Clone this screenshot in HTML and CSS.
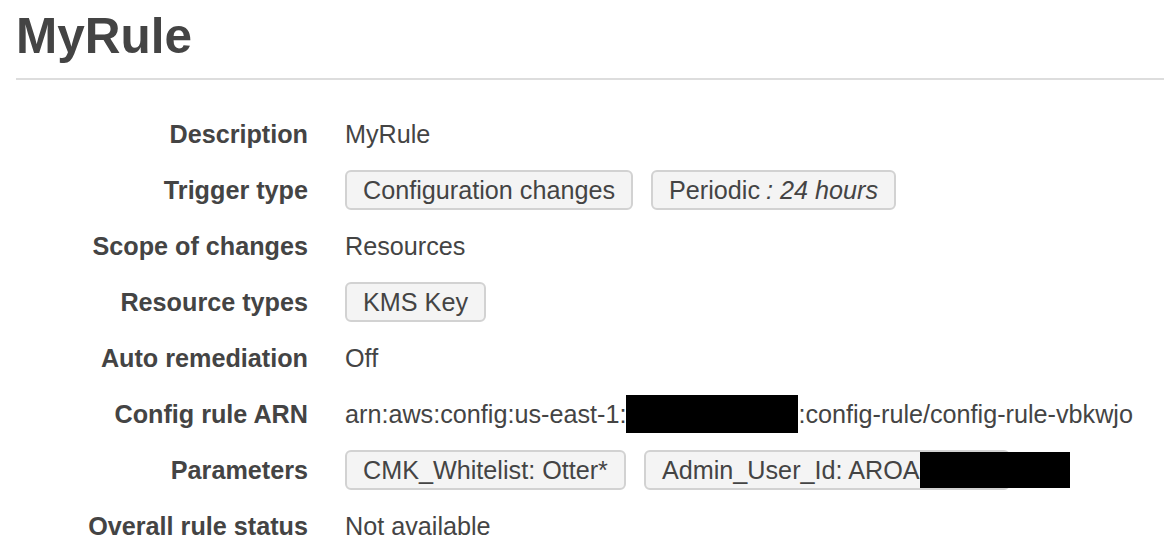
FILE: index.html
```html
<!DOCTYPE html>
<html>
<head>
<meta charset="utf-8">
<link rel="stylesheet" href="styles.css">
</head>
<body>
<div class="page">
  <h1 class="title">MyRule</h1>
  <div class="details">
    <div class="label">Description</div>
    <div class="value">MyRule</div>

    <div class="label">Trigger type</div>
    <div class="value tags">
      <span class="tag">Configuration changes</span>
      <span class="tag">Periodic <i>: 24 hours</i></span>
    </div>

    <div class="label">Scope of changes</div>
    <div class="value">Resources</div>

    <div class="label">Resource types</div>
    <div class="value tags">
      <span class="tag">KMS Key</span>
    </div>

    <div class="label">Auto remediation</div>
    <div class="value">Off</div>

    <div class="label">Config rule ARN</div>
    <div class="value arn">arn:aws:config:us-east-1:<span class="redact-inline"></span>:config-rule/config-rule-vbkwjo</div>

    <div class="label">Parameters</div>
    <div class="value tags">
      <span class="tag">CMK_Whitelist: Otter*</span>
      <span class="tag">Admin_User_Id: AROA<span class="spacer"><span class="redact-over"></span></span></span>
    </div>

    <div class="label">Overall rule status</div>
    <div class="value">Not available</div>
  </div>
</div>
</body>
</html>
```

FILE: styles.css
```css
html, body {
  margin: 0;
  padding: 0;
  background: #ffffff;
}

body {
  font-family: "Liberation Sans", Arial, Helvetica, sans-serif;
  color: #444444;
  width: 1164px;
  height: 550px;
  overflow: hidden;
}

.page {
  padding-left: 16px;
}

.title {
  margin: 8px 0 0 0;
  font-size: 49.5px;
  line-height: 56px;
  font-weight: bold;
  color: #444444;
  padding-bottom: 14px;
  border-bottom: 2px solid #dddddd;
}

.details {
  display: grid;
  grid-template-columns: 292px 1fr;
  column-gap: 37px;
  grid-auto-rows: 56px;
  align-items: center;
  margin-top: 26px;
  font-size: 25.2px;
}

.label {
  text-align: right;
  font-weight: bold;
  color: #444444;
}

.value {
  color: #444444;
  white-space: nowrap;
  display: flex;
  align-items: center;
}

.tags {
  gap: 18px;
}

.tag {
  display: inline-flex;
  align-items: center;
  box-sizing: border-box;
  height: 40px;
  padding: 0 16px;
  border: 2px solid #d2d2d2;
  border-radius: 6px;
  background: #f4f4f4;
}

.tag i {
  margin-left: 6px;
}

.spacer {
  position: relative;
  display: inline-block;
  width: 72px;
  height: 36px;
}

.redact-over {
  position: absolute;
  left: 0;
  top: 0;
  width: 150px;
  height: 36px;
  background: #000000;
}

.redact-inline {
  display: inline-block;
  width: 172px;
  height: 38px;
  background: #000000;
}
```
